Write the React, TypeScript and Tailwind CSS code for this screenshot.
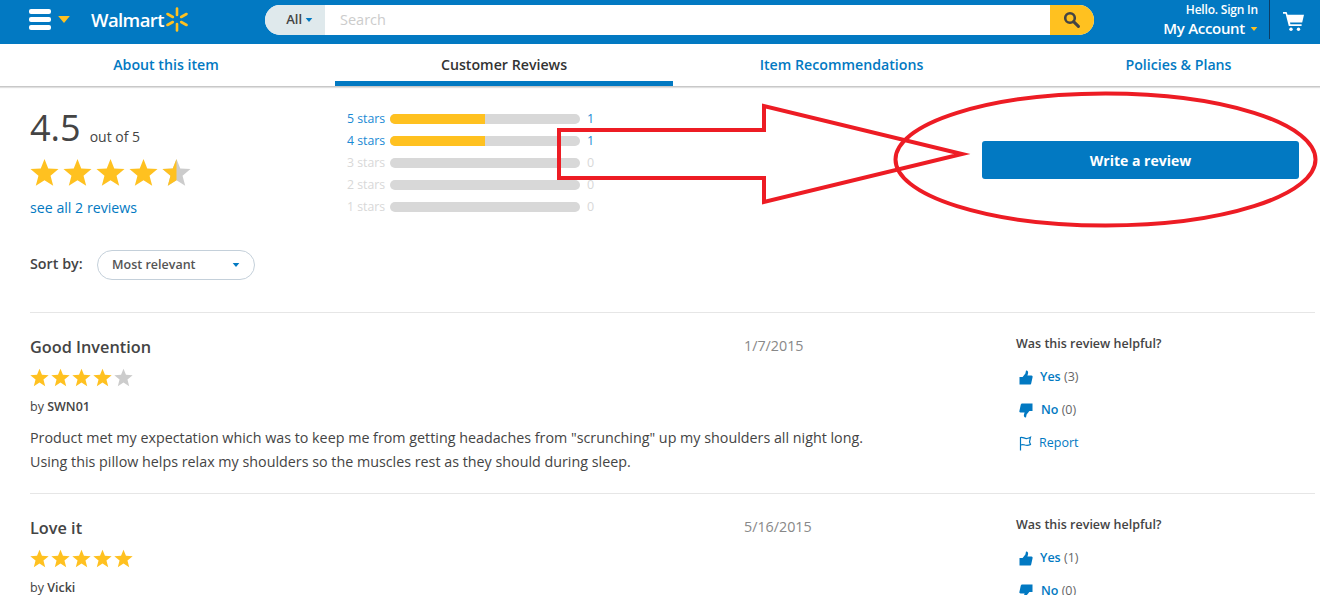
import React from "react";

const STAR = "M12 0.8 L15.1 8.6 L23.6 9.2 L17 14.6 L19.2 23 L12 18.4 L4.8 23 L7 14.6 L0.4 9.2 L8.9 8.6 Z";

function Star({ size, fill, half }: { size: number; fill: string; half?: boolean }) {
  return (
    <svg width={size} height={size} viewBox="0 0 24 24" className="block shrink-0">
      <path d={STAR} fill={fill} />
      {half && <path d="M12 0.8 L12 18.4 L4.8 23 L7 14.6 L0.4 9.2 L8.9 8.6 Z" fill="#ffc120" />}
    </svg>
  );
}

function Stars({ n, total = 5, size, gapClass, half }: { n: number; total?: number; size: number; gapClass: string; half?: boolean }) {
  return (
    <div className={"flex " + gapClass}>
      {Array.from({ length: total }).map((_, i) =>
        i < n ? (
          <Star key={i} size={size} fill="#ffc120" />
        ) : (
          <Star key={i} size={size} fill="#cccccc" half={half} />
        )
      )}
    </div>
  );
}

function Caret({ color, w, h }: { color: string; w: number; h: number }) {
  return (
    <svg width={w} height={h} viewBox="0 0 10 6" className="block shrink-0">
      <path d="M0 0 H10 L5 6 Z" fill={color} />
    </svg>
  );
}

function Spark() {
  return (
    <svg width="22" height="25" viewBox="0 0 22 25" className="block">
      <g stroke="#ffc120" strokeWidth="2.6" strokeLinecap="round">
        <path d="M11 1.5 V8" />
        <path d="M11 17 V23.5" />
        <path d="M1.5 7 L6.8 10" />
        <path d="M20.5 7 L15.2 10" />
        <path d="M1.5 18 L6.8 15" />
        <path d="M20.5 18 L15.2 15" />
      </g>
    </svg>
  );
}

function Thumb({ down }: { down?: boolean }) {
  return (
    <svg width="14" height="15" viewBox="0 0 14 15" className={"block shrink-0" + (down ? " rotate-180" : "")}>
      <path
        d="M0.5 7 H3.6 L6.4 3.6 L7 0.4 C8.8 0.2 9.6 2 8.9 4 L8.4 5.6 H12.4 C13.6 5.6 13.9 6.6 13.5 7.6 L12.2 13.4 C12 14.3 11.4 14.6 10.6 14.6 H0.5 Z"
        fill="#0279c2"
      />
    </svg>
  );
}

function Flag() {
  return (
    <svg width="13" height="15" viewBox="0 0 13 15" className="block shrink-0" fill="none" stroke="#0279c2" strokeWidth="1.2">
      <path d="M1.5 14.5 V1.5 C4 0.5 5.5 3 8 2.5 C9.5 2.2 10.5 1.8 11.5 1.2 L10.5 6 L11.5 8.5 C9.5 9.5 7.5 9.5 6 9 C4.5 8.4 3 8.4 1.5 9" />
    </svg>
  );
}

const bars = [
  { label: "5 stars", count: 1 },
  { label: "4 stars", count: 1 },
  { label: "3 stars", count: 0 },
  { label: "2 stars", count: 0 },
  { label: "1 stars", count: 0 },
];

function Helpful({ yes, no }: { yes: number; no: number }) {
  return (
    <div className="w-[299px] shrink-0 text-[12.5px]">
      <div className="font-semibold leading-[17px] text-[#444]">Was this review helpful?</div>
      <div className="mt-[17px] ml-[3px] flex h-[17px] items-center gap-[7px]">
        <Thumb />
        <span>
          <span className="font-semibold text-[#0279c2]">Yes</span> <span className="text-[#666]">({yes})</span>
        </span>
      </div>
      <div className="mt-[16px] ml-[3px] flex h-[17px] items-center gap-[8px]">
        <Thumb down />
        <span>
          <span className="font-semibold text-[#0279c2]">No</span> <span className="text-[#666]">({no})</span>
        </span>
      </div>
      <div className="mt-[16px] ml-[3px] flex h-[17px] items-center gap-[7px]">
        <Flag />
        <span className="text-[#0279c2]">Report</span>
      </div>
    </div>
  );
}

export default function App() {
  return (
    <div className="relative h-[595px] w-[1320px] overflow-hidden bg-white font-['Open_Sans',sans-serif] text-[#444]">
      <header className="flex h-[44px] items-center bg-[#0279c2] pb-[5px] pl-[29px] text-white">
        <div className="flex w-[42px] items-center gap-[7px]">
          <div className="flex w-[22px] shrink-0 flex-col gap-[3px]">
            <div className="h-[5px] rounded-[2px] bg-white" />
            <div className="h-[5px] rounded-[2px] bg-white" />
            <div className="h-[5px] rounded-[2px] bg-white" />
          </div>
          <Caret color="#ffc120" w={12} h={7} />
        </div>
        <div className="ml-[20px] flex w-[174px] items-center gap-[2px]">
          <span className="text-[18.5px] font-semibold tracking-[-0.6px]">Walmart</span>
          <Spark />
        </div>
        <div className="flex h-[30px] w-[829px] overflow-hidden rounded-full bg-white">
          <div className="flex w-[60px] items-center justify-end gap-[3px] bg-[#dfe9ec] pr-[12px] text-[13px] font-semibold text-[#444]">
            All
            <Caret color="#0279c2" w={8} h={4} />
          </div>
          <div className="flex flex-1 items-center pl-[15px] text-[14.5px] text-[#ccc]">Search</div>
          <div className="flex w-[44px] items-center justify-center bg-[#ffc120] pr-[2px]">
            <svg width="17" height="17" viewBox="0 0 17 17" fill="none" stroke="#444" className="block">
              <circle cx="7" cy="7" r="4.8" strokeWidth="2.6" />
              <path d="M10.6 10.6 L15.4 15.4" strokeWidth="3" strokeLinecap="round" />
            </svg>
          </div>
        </div>
        <div className="flex w-[175px] flex-col items-end pt-[2px] pr-[11px]">
          <div className="text-[12px] leading-[14px] font-semibold tracking-[-0.2px]">Hello. Sign In</div>
          <div className="mt-[2px] flex items-center gap-[5px] text-[15px] leading-[19px] font-semibold tracking-[-0.3px]">
            My Account
            <Caret color="#ffc120" w={8} h={4} />
          </div>
        </div>
        <div className="flex h-[39px] items-center self-start border-l border-[#0b3d66] pl-[13px]">
          <svg width="21" height="19" viewBox="0 0 21 19" className="mt-[4px] block">
            <path d="M0 0 H3.6 L4.6 2.8 H21 L19.2 10.5 H7 L7.4 12.3 H18.6 V14 H5.8 L2.6 1.8 H0 Z" fill="white" />
            <circle cx="8" cy="17.2" r="1.7" fill="white" />
            <circle cx="15.5" cy="17.2" r="1.7" fill="white" />
          </svg>
        </div>
      </header>

      <nav className="-ml-[3px] grid h-[43px] w-[1350px] grid-cols-[338px_338px_337px_337px] border-b border-[#c8c8c8] text-center text-[14.2px] leading-[20px] font-semibold shadow-[0_1px_1px_#e0e0e0]">
        <div className="pt-[11px] text-[#0279c2]">About this item</div>
        <div className="border-b-[5px] border-[#0279c2] pt-[11px] text-[#333]">Customer Reviews</div>
        <div className="pt-[11px] text-[#0279c2]">Item Recommendations</div>
        <div className="pt-[11px] text-[#0279c2]">Policies &amp; Plans</div>
      </nav>

      <main className="pr-[5px] pl-[30px]">
        <section className="flex h-[138px] items-start">
          <div className="w-[317px] shrink-0">
            <div className="mt-[15px] flex h-[52px] items-baseline gap-[9px]">
              <span className="text-[36px] leading-[52px]">4.5</span>
              <span className="relative top-[1px] text-[14px]">out of 5</span>
            </div>
            <div className="mt-[4px]">
              <Stars n={4} size={29} gapClass="gap-[4px]" half />
            </div>
            <div className="mt-[11px] text-[14.2px] leading-[20px] text-[#0279c2]">see all 2 reviews</div>
          </div>
          <div className="mt-[22px] flex w-[635px] shrink-0 flex-col gap-[2px]">
            {bars.map((b) => {
              const on = b.count > 0;
              return (
                <div key={b.label} className="flex h-[20px] items-center">
                  <span className={"w-[43px] text-[12.3px] " + (on ? "text-[#1a8ad4]" : "text-[#d8d8d8]")}>{b.label}</span>
                  <div className="h-[10px] w-[190px] overflow-hidden rounded-full bg-[#d8d8d8]">
                    {on && <div className="h-full w-1/2 bg-[#ffc120]" />}
                  </div>
                  <span className={"ml-[7px] text-[12.5px] " + (on ? "text-[#1a8ad4]" : "text-[#d8d8d8]")}>{b.count}</span>
                </div>
              );
            })}
          </div>
          <button className="mt-[54px] h-[38px] w-[317px] shrink-0 rounded-[3px] bg-[#0279c2] text-[14px] font-bold text-white">
            Write a review
          </button>
        </section>

        <div className="flex h-[87px] items-start">
          <div className="mt-[25px] flex h-[30px] items-center">
            <span className="relative -top-[1px] w-[67px] text-[14.3px] font-semibold">Sort by:</span>
            <div className="flex h-[30px] w-[158px] items-center justify-between rounded-full border border-[#c4d0da] px-[14px] text-[12.5px] font-semibold text-[#555]">
              Most relevant
              <Caret color="#0279c2" w={8} h={4} />
            </div>
          </div>
        </div>

        <article className="flex h-[181px] border-t border-[#e6e6e6]">
          <div className="w-[714px] shrink-0">
            <h3 className="mt-[23px] text-[16.3px] leading-[22px] font-semibold">Good Invention</h3>
            <div className="mt-[10px]"><Stars n={4} size={19} gapClass="gap-[2px]" /></div>
            <div className="mt-[11px] text-[12.5px] leading-[18px]">by <span className="font-semibold">SWN01</span></div>
            <p className="mt-[10px] w-[900px] text-[14.3px] leading-[24px]">
              Product met my expectation which was to keep me from getting headaches from "scrunching" up my shoulders all night long.<br />
              Using this pillow helps relax my shoulders so the muscles rest as they should during sleep.
            </p>
          </div>
          <div className="mt-[23px] w-[272px] shrink-0 text-[14.3px] leading-[20px] text-[#888]">1/7/2015</div>
          <div className="mt-[22px]"><Helpful yes={3} no={0} /></div>
        </article>

        <article className="flex h-[120px] border-t border-[#e6e6e6]">
          <div className="w-[714px] shrink-0">
            <h3 className="mt-[23px] text-[16.3px] leading-[22px] font-semibold">Love it</h3>
            <div className="mt-[10px]"><Stars n={5} size={19} gapClass="gap-[2px]" /></div>
            <div className="mt-[11px] text-[12.5px] leading-[18px]">by <span className="font-semibold">Vicki</span></div>
          </div>
          <div className="mt-[23px] w-[272px] shrink-0 text-[14.3px] leading-[20px] text-[#888]">5/16/2015</div>
          <div className="mt-[22px]"><Helpful yes={1} no={0} /></div>
        </article>
      </main>

      <svg width="1320" height="595" viewBox="0 0 1320 595" className="pointer-events-none absolute top-0 left-0">
        <path d="M559 130 H764 V106 L962 154 L764 202 V178 H559 Z" fill="none" stroke="#ed1c24" strokeWidth="4" strokeLinejoin="miter" strokeMiterlimit="10" />
        <ellipse cx="1105.5" cy="159.5" rx="210" ry="66" fill="none" stroke="#ed1c24" strokeWidth="4" />
      </svg>
    </div>
  );
}
